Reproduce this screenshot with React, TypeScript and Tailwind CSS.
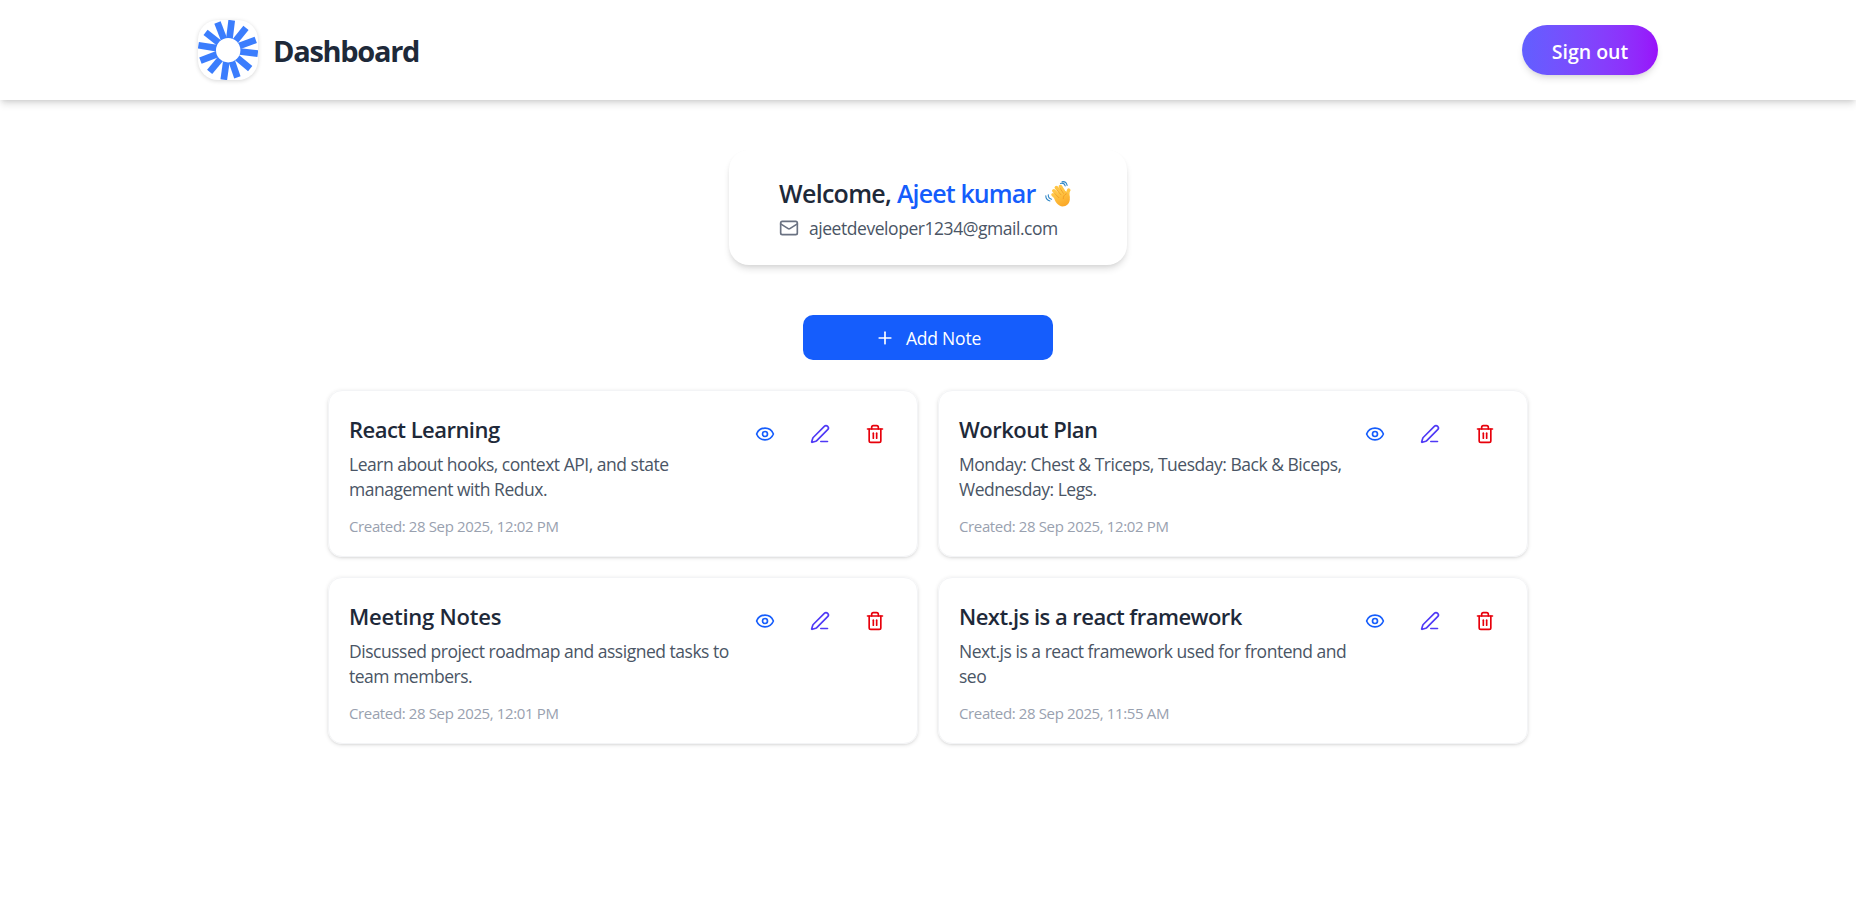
import React from "react";
import { Mail, Plus, Eye, PenLine, Trash2 } from "lucide-react";

const notes = [
  { title: "React Learning", tt: "tracking-[-0.53px]", lines: ["Learn about hooks, context API, and state", "management with Redux."], created: "28 Sep 2025, 12:02 PM" },
  { title: "Workout Plan", tt: "tracking-[-0.5px]", lines: ["Monday: Chest & Triceps, Tuesday: Back & Biceps,", "Wednesday: Legs."], created: "28 Sep 2025, 12:02 PM" },
  { title: "Meeting Notes", tt: "tracking-[-0.22px]", lines: ["Discussed project roadmap and assigned tasks to", "team members."], created: "28 Sep 2025, 12:01 PM" },
  { title: "Next.js is a react framework", tt: "tracking-[-0.54px]", lines: ["Next.js is a react framework used for frontend and", "seo"], created: "28 Sep 2025, 11:55 AM" },
];

const rays = [
  [7, 30], [39, 28.5], [70, 29.5], [97, 30], [130, 29], [161, 29],
  [188, 30], [220, 28.5], [249, 29.5], [279, 30], [308, 28.5], [339, 29.5],
];

function Logo() {
  return (
    <div className="size-[60px] overflow-hidden rounded-[20px] bg-white shadow-[0_1px_4px_rgba(0,0,0,0.16)]">
      <svg viewBox="0 0 60 60" className="size-full blur-[0.5px]">
        <g fill="#3b7dfd">
          {rays.map(([a, len]) => (
            <rect key={a} x="26.700" y={30 - len} width="6.700" height={len - 10} transform={`rotate(${a} 30 30)`} />
          ))}
        </g>
        <circle cx="30.2" cy="30.2" r="12.2" fill="#fff" />
      </svg>
    </div>
  );
}

function WavingHand() {
  return (
    <svg viewBox="0 0 26 26" className="ml-[10px] size-[26px]" fill="none" strokeLinecap="round">
      <defs>
        <linearGradient id="skin" x1="0" y1="0" x2="0.5" y2="1">
          <stop offset="0" stopColor="#ffcf4f" />
          <stop offset="1" stopColor="#fba928" />
        </linearGradient>
      </defs>
      <g stroke="#ffc545" strokeWidth="3.5">
        <path d="M8 13.800l6 5.500" />
        <path d="M8.800 9.800l7 7" />
        <path d="M11.300 6.500l7 8" />
        <path d="M15.400 5.500l5 8" />
        <path d="M23.700 9.200c-1.200 1.500-1 4-.9 7" />
      </g>
      <path d="M9 15.500C12 12 15 9.500 19.500 9.800c3.500 1.500 5.500 4 5.300 8.700-.2 4-3.300 7-7.300 7-4 0-8.500-5.500-8.500-10z" fill="url(#skin)" />
      <path d="M9.800 12.600l4 4M12 9.200l4 4.600M15.200 7.500l3.200 4.800M21.300 12.800c-2.200 1-3.200 2.700-3 4.700" stroke="#e88b1c" strokeWidth=".6" />
      <path d="M15.500 2.400c2.200-.7 4 .4 4.700 2.500M17 .7c2.700-.4 4.600 1.100 5.100 3.700M3.300 13.700c-.2 2.300 1.100 4 3.300 4.500M.8 14.800c0 2.700 1.700 4.700 4.200 5.200" stroke="#2f86c6" strokeWidth="1.1" />
    </svg>
  );
}

export default function App() {
  return (
    <div className="h-[913px] overflow-hidden bg-white font-['Open_Sans','Noto_Sans',sans-serif] text-gray-800">
      <header className="flex h-[100px] justify-center bg-white shadow-[0_5px_7.5px_-1px_rgba(0,0,0,0.13),0_2px_5px_-2px_rgba(0,0,0,0.12)]">
        <div className="flex w-[1460px] items-center justify-between">
          <div className="flex items-center gap-[15px]">
            <Logo />
            <h1 className="pt-[2px] text-[29px] font-bold tracking-[-1.3px]">Dashboard</h1>
          </div>
          <button className="h-[50px] w-[136px] rounded-full bg-linear-to-r from-[#615fff] to-[#9810fa] pt-[3px] text-[19.5px] font-semibold text-white shadow-[0_5px_7.5px_-1px_rgba(0,0,0,0.1),0_2px_5px_-2px_rgba(0,0,0,0.1)]">
            Sign out
          </button>
        </div>
      </header>
      <main className="flex flex-col items-center pt-[50px]">
        <section className="h-[115px] w-[398px] rounded-[20px] bg-white pt-[25px] pl-[50px] shadow-[0_5px_7.5px_-1px_rgba(0,0,0,0.12),0_2px_5px_-2px_rgba(0,0,0,0.1)]">
          <h2 className="flex h-[37px] items-center text-[25px] font-semibold whitespace-pre">
            <span className="tracking-[-0.7px]">Welcome, </span>
            <span className="tracking-[-0.87px] text-[#155dfc]">Ajeet kumar</span>
            <WavingHand />
          </h2>
          <p className="flex h-[32px] items-center gap-[10px] text-[17.5px] text-gray-600">
            <Mail size={20} className="text-gray-500" />
            <span className="tracking-[-0.45px]">ajeetdeveloper1234@gmail.com</span>
          </p>
        </section>
        <button className="mt-[50px] flex h-[45px] w-[250px] items-center justify-center gap-[11px] rounded-[10px] bg-[#155dfc] text-[17.5px] text-white">
          <Plus size={20} />
          <span className="pt-[2px] tracking-[-0.2px]">Add Note</span>
        </button>
        <div className="mt-[30px] grid w-[1200px] grid-cols-2 gap-5">
          {notes.map((n) => (
            <article key={n.title} className="flex h-[167px] justify-between rounded-[14px] border border-gray-100 px-5 pt-[21px] shadow-[0_1px_4px_rgba(0,0,0,0.12),0_1px_2.5px_-1px_rgba(0,0,0,0.12)]">
              <div>
                <h3 className={`text-[22px] leading-[35px] font-semibold ${n.tt}`}>{n.title}</h3>
                <div className="mt-[5px] text-[17.5px] leading-[25px] tracking-[-0.48px] whitespace-nowrap text-gray-600">
                  {n.lines.map((t) => <p key={t}>{t}</p>)}
                </div>
                <p className="mt-[14px] text-[15px] leading-5 tracking-[-0.37px] text-gray-400">Created: {n.created}</p>
              </div>
              <div className="flex gap-[35px] pt-3 pr-[12px]">
                <Eye size={20} className="text-[#155dfc]" />
                <PenLine size={20} className="text-[#4f39f6]" />
                <Trash2 size={20} className="text-[#e7000b]" />
              </div>
            </article>
          ))}
        </div>
      </main>
    </div>
  );
}
